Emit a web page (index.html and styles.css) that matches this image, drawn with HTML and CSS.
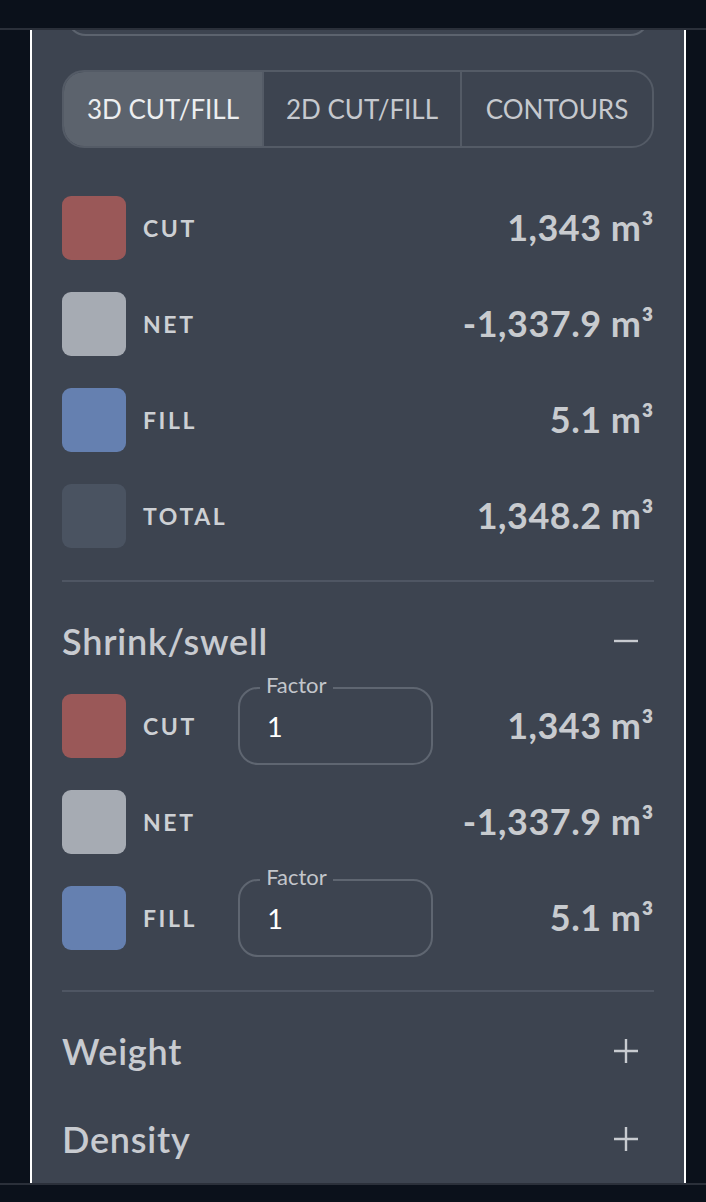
FILE: index.html
```html
<!DOCTYPE html>
<html lang="en">

<head>
    <meta charset="UTF-8" />
    <meta name="viewport" content="width=device-width, initial-scale=1" />
    <title>Volume</title>
    <link rel="stylesheet" href="styles.css">
</head>

<body>
    <div class="topbar"></div>

    <div class="layout">
        <aside class="panel">
            <div class="field-stub"></div>

            <div class="tabs">
                <div class="tab active">3D CUT/FILL</div>
                <div class="tab">2D CUT/FILL</div>
                <div class="tab">CONTOURS</div>
            </div>

            <div class="legend">
                <div class="row">
                    <span class="swatch cut"></span>
                    <span class="label">CUT</span>
                    <span class="value">1,343 m³</span>
                </div>
                <div class="row">
                    <span class="swatch net"></span>
                    <span class="label">NET</span>
                    <span class="value">-1,337.9 m³</span>
                </div>
                <div class="row">
                    <span class="swatch fill"></span>
                    <span class="label">FILL</span>
                    <span class="value">5.1 m³</span>
                </div>
                <div class="row">
                    <span class="swatch total"></span>
                    <span class="label">TOTAL</span>
                    <span class="value">1,348.2 m³</span>
                </div>
            </div>

            <hr class="divider">

            <div class="section-head">
                <h3>Shrink/swell</h3>
                <svg class="toggle" width="24" height="24" viewBox="0 0 24 24">
                    <path d="M0 12H24" stroke="currentColor" stroke-width="2.4" />
                </svg>
            </div>

            <div class="legend shrink">
                <div class="row">
                    <span class="swatch cut"></span>
                    <span class="label">CUT</span>
                    <div class="factor">
                        <span class="factor-label">Factor</span>
                        <span class="factor-value">1</span>
                    </div>
                    <span class="value">1,343 m³</span>
                </div>
                <div class="row">
                    <span class="swatch net"></span>
                    <span class="label">NET</span>
                    <span class="value">-1,337.9 m³</span>
                </div>
                <div class="row">
                    <span class="swatch fill"></span>
                    <span class="label">FILL</span>
                    <div class="factor">
                        <span class="factor-label">Factor</span>
                        <span class="factor-value">1</span>
                    </div>
                    <span class="value">5.1 m³</span>
                </div>
            </div>

            <hr class="divider">

            <div class="section-head">
                <h3>Weight</h3>
                <svg class="toggle" width="24" height="24" viewBox="0 0 24 24">
                    <path d="M0 12H24M12 0V24" stroke="currentColor" stroke-width="2.4" />
                </svg>
            </div>

            <div class="section-head">
                <h3>Density</h3>
                <svg class="toggle" width="24" height="24" viewBox="0 0 24 24">
                    <path d="M0 12H24M12 0V24" stroke="currentColor" stroke-width="2.4" />
                </svg>
            </div>
        </aside>
    </div>

    <div class="bottombar"></div>
</body>

</html>
```

FILE: styles.css
```css
* {
    margin: 0;
    padding: 0;
    box-sizing: border-box;
}

body {
    font-family: 'Lato', 'Noto Sans', sans-serif;
    background: #0b111b;
    height: 100vh;
    display: flex;
    flex-direction: column;
    overflow: hidden;
}

.topbar {
    height: 30px;
    border-bottom: 2px solid #2b303a;
}

.layout {
    height: 1153px;
    display: flex;
}

/* Painel lateral */
.panel {
    margin-left: 30px;
    width: 656px;
    background: #3d4450;
    border-left: 2px solid #ffffff;
    border-right: 2px solid #ffffff;
    padding: 0 30px;
    overflow: hidden;
    display: flex;
    flex-direction: column;
}

.bottombar {
    flex: 1;
    border-top: 2px solid #2b303a;
}

/* Campo cortado no topo do painel */
.field-stub {
    flex-shrink: 0;
    height: 44px;
    margin: -38px 4px 0;
    border: 2px solid #5c636e;
    border-radius: 20px;
}

.tabs {
    flex-shrink: 0;
    margin-top: 34px;
    height: 78px;
    display: grid;
    grid-template-columns: 198px 198px 1fr;
    border: 2px solid #545b66;
    border-radius: 22px;
    overflow: hidden;
}

.tab {
    display: flex;
    align-items: center;
    justify-content: center;
    font-size: 26px;
    color: #c6c9ce;
    border-left: 2px solid #545b66;
}

.tab:first-child {
    border-left: none;
}

.tab.active {
    background: #5c636d;
    color: #eceef0;
}

.legend {
    margin-top: 48px;
    display: flex;
    flex-direction: column;
    gap: 32px;
}

.legend.shrink {
    margin-top: 24px;
}

.row {
    height: 64px;
    display: flex;
    align-items: center;
}

.swatch {
    width: 64px;
    height: 64px;
    border-radius: 9px;
    flex-shrink: 0;
}

.swatch.cut {
    background: #9a5858;
}

.swatch.net {
    background: #a6abb3;
}

.swatch.fill {
    background: #6580b0;
}

.swatch.total {
    background: #4a5361;
}

.label {
    margin-left: 17px;
    font-size: 23px;
    font-weight: 700;
    letter-spacing: 2.6px;
    color: #cdd0d4;
}

.value {
    margin-left: auto;
    margin-top: -3px;
    font-size: 36px;
    font-weight: 700;
    letter-spacing: 0.5px;
    color: #c8cbcf;
}

.factor {
    position: relative;
    margin-left: 41px;
    width: 195px;
    height: 78px;
    flex-shrink: 0;
    border: 2px solid #5f6671;
    border-radius: 20px;
    display: flex;
    align-items: center;
    padding-left: 27px;
}

.factor-label {
    position: absolute;
    top: -18px;
    left: 20px;
    padding: 0 6px;
    background: #3d4450;
    font-size: 22px;
    color: #c3c6cb;
}

.factor-value {
    font-size: 27px;
    color: #ffffff;
}

.divider {
    flex-shrink: 0;
    margin-top: 32px;
    border: none;
    height: 2px;
    background: #4f5663;
}

.legend.shrink + .divider {
    margin-top: 40px;
}

.section-head {
    flex-shrink: 0;
    margin-top: 30px;
    height: 58px;
    display: flex;
    align-items: center;
    justify-content: space-between;
    color: #c8cbd0;
}

.section-head h3 {
    font-size: 36px;
    font-weight: 600;
    letter-spacing: 0.8px;
}

.toggle {
    margin-right: 16px;
}
```
